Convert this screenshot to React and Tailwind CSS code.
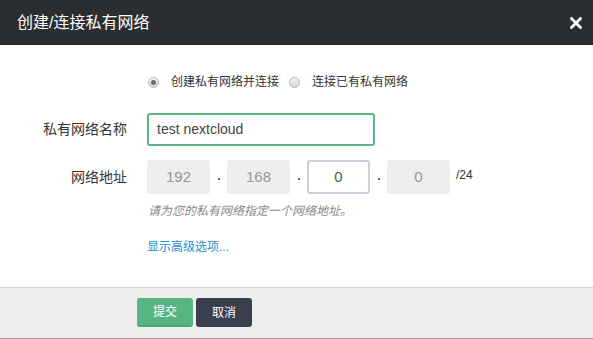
import React from "react";

const font = { fontFamily: '"Liberation Sans", "Noto Sans CJK SC", sans-serif' };

const Radio = ({ checked, label }) => (
  <label className="flex items-center">
    <span className="w-[11px] h-[11px] rounded-full border border-[#b5b5b5] bg-gradient-to-b from-[#f2f2f2] to-[#d9d9d9] flex items-center justify-center">
      {checked && <span className="w-[5px] h-[5px] rounded-full bg-[#6b6b6b]" />}
    </span>
    <span className="ml-[12px] text-[12px] text-[#333]">{label}</span>
  </label>
);

const IpBox = ({ value, active }) => (
  <div
    className={
      active
        ? "w-[63px] h-[34px] rounded-[3px] border-2 border-[#cfcddb] bg-white flex items-center justify-center text-[15px] text-[#555]"
        : "w-[63px] h-[34px] rounded-[3px] bg-[#eeeeee] flex items-center justify-center text-[15px] text-[#999]"
    }
  >
    {value}
  </div>
);

const Dot = () => (
  <div className="w-[17px] flex justify-center items-center pt-[4px]">
    <span className="w-[2px] h-[2px] bg-[#666]" />
  </div>
);

export default function App() {
  return (
    <div className="w-[593px] h-[339px] bg-white flex flex-col" style={font}>
      {/* header */}
      <div className="h-[45px] bg-[#2b2e30] flex items-center justify-between pl-[17px] pr-[11px]">
        <span className="text-white text-[16px]">创建/连接私有网络</span>
        <svg width="12" height="12" viewBox="0 0 12 12">
          <path d="M1.5 1.5 L10.5 10.5 M10.5 1.5 L1.5 10.5" stroke="#fff" strokeWidth="2.8" strokeLinecap="square" />
        </svg>
      </div>

      {/* body */}
      <div className="flex-1 flex flex-col pt-[27px]">
        <div className="h-[20px] flex items-center pl-[148px] gap-[10px]">
          <Radio checked label="创建私有网络并连接" />
          <Radio label="连接已有私有网络" />
        </div>

        <div className="flex items-center mt-[21px]">
          <div className="w-[127px] text-right text-[14px] text-[#333]">私有网络名称</div>
          <div className="ml-[20px] w-[228px] h-[33px] rounded-[3px] border-2 border-[#5bb487] flex items-center pl-[8px] text-[14px] text-[#444]">
            test nextcloud
          </div>
        </div>

        <div className="flex items-center mt-[14px]">
          <div className="w-[127px] text-right text-[14px] text-[#333]">网络地址</div>
          <div className="ml-[20px] flex items-center">
            <IpBox value="192" />
            <Dot />
            <IpBox value="168" />
            <Dot />
            <IpBox value="0" active />
            <Dot />
            <IpBox value="0" />
            <span className="ml-[6px] -mt-[4px] text-[12px] text-[#333]">/24</span>
          </div>
        </div>

        <div className="h-[18px] mt-[8px] pl-[148px] flex items-center text-[12px] italic text-[#888]">
          请为您的私有网络指定一个网络地址。
        </div>

        <div className="h-[18px] mt-[18px] pl-[147px] flex items-center text-[12px] text-[#2a8fcf]">
          显示高级选项...
        </div>
      </div>

      {/* footer */}
      <div className="h-[52px] bg-[#eeeeee] border-t border-[#cfcfd6] border-b border-b-[#9a9a9a] flex items-start pt-[10px] pl-[137px] gap-[3px]">
        <button className="w-[56px] h-[29px] rounded-[3px] bg-[#57b583] border-b-2 border-[#4ea674] text-white text-[12px]">
          提交
        </button>
        <button className="w-[56px] h-[29px] rounded-[3px] bg-[#3b3e4c] text-white text-[12px]">
          取消
        </button>
      </div>
    </div>
  );
}
